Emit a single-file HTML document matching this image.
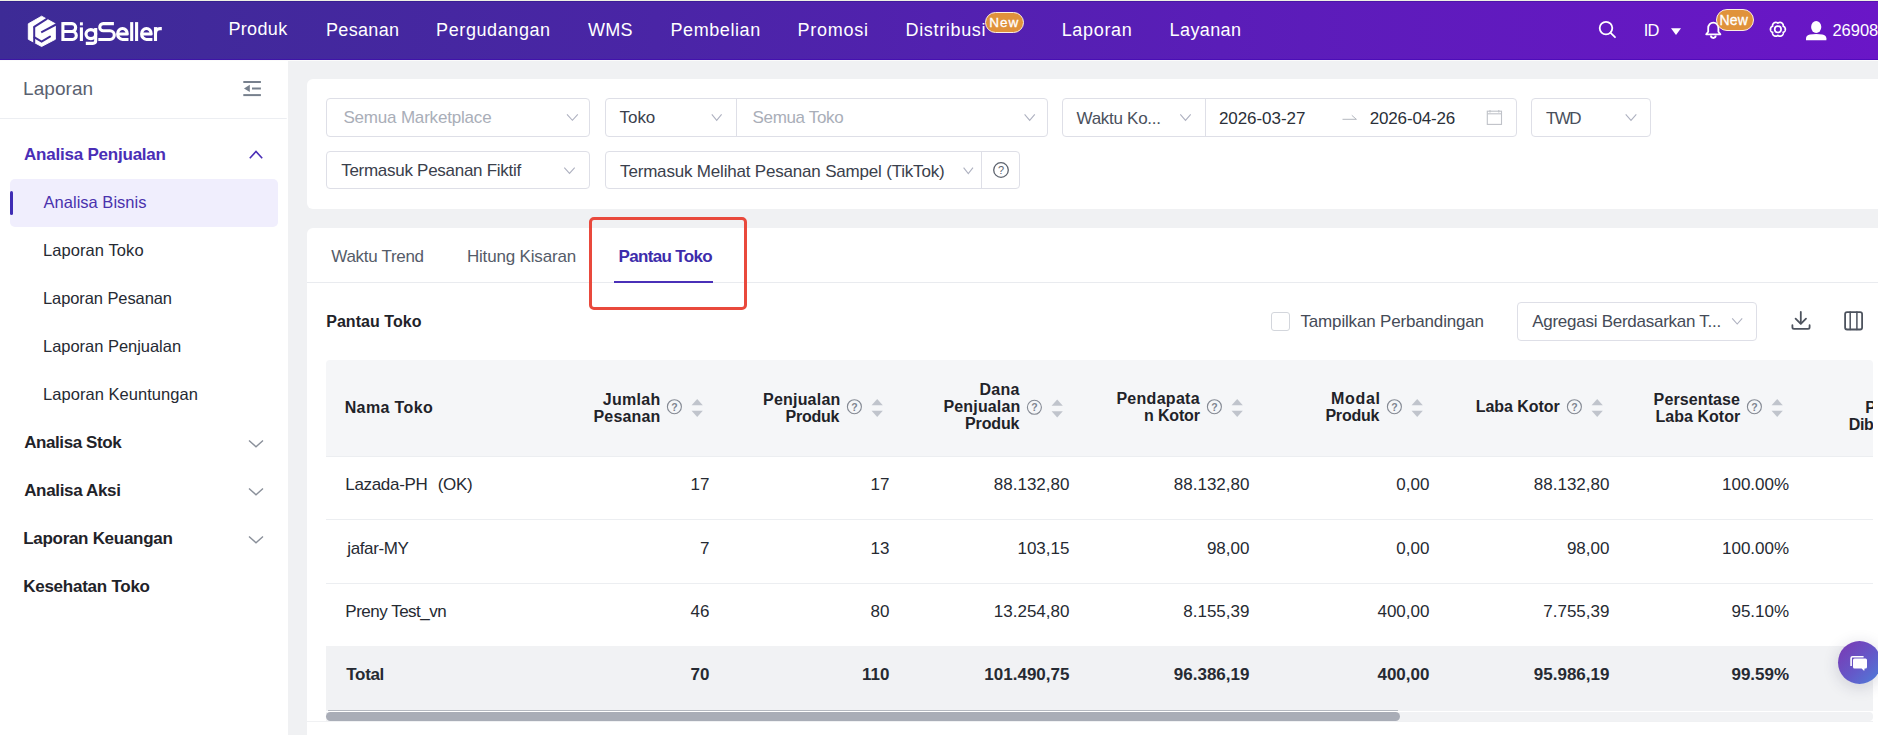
<!DOCTYPE html>
<html><head><meta charset="utf-8">
<style>
*{box-sizing:border-box}
html,body{margin:0;padding:0}
body{width:1878px;height:735px;overflow:hidden;position:relative;background:#f0f1f3;font-family:"Liberation Sans",sans-serif}
.a{position:absolute}
.t{position:absolute;white-space:nowrap;font-family:"Liberation Sans",sans-serif}
.inp{position:absolute;background:#fff;border:1px solid #dedfe7;border-radius:4px}
svg{position:absolute;overflow:visible}
</style></head><body>
<!-- header -->
<div class="a" style="left:0;top:0;width:1878px;height:1px;background:#eef1e4"></div>
<div class="a" style="left:0;top:1px;width:1878px;height:59px;background:linear-gradient(90deg,#3d2b96 0%,#4a25a6 35%,#5a1db8 65%,#6a16c7 100%)"></div>
<div class="a" style="left:0;top:1px;width:1878px;height:1px;background:rgba(20,10,100,.22)"></div>
<div class="a" style="left:0;top:59px;width:1878px;height:1px;background:rgba(60,0,180,.5)"></div>
<div class="a" style="left:0;top:60px;width:1878px;height:1px;background:#fbfbfb"></div>
<!-- logo icon -->
<svg style="left:0;top:0" width="60" height="60" viewBox="0 0 60 60">
<polygon points="41.6,16.2 55.4,23.8 55.4,39.3 41.6,46.5 28.3,39.3 28.3,23.8" fill="#fff" stroke="#fff" stroke-width="0.9" stroke-linejoin="round"/>
<g stroke="#3f2b98" stroke-width="2" fill="none" stroke-linecap="round">
<line x1="34.2" y1="26.8" x2="34.2" y2="43.5" stroke-linecap="butt"/>
<line x1="34.2" y1="26.8" x2="46.8" y2="18.8"/>
<line x1="41.2" y1="32.3" x2="57" y2="24" stroke-linecap="butt"/>
<polyline points="34.5,37.4 41.6,41.6 50,36.6"/>
</g>
</svg>
<svg style="left:0;top:0" width="170" height="60" viewBox="0 0 170 60">
<g fill="none" stroke="#fff" stroke-width="3.1" stroke-linecap="butt" stroke-linejoin="round">
<path d="M62.9 22.1 L62.9 41"/>
<path d="M62.9 23.65 L72 23.65 A3.65 3.95 0 0 1 72 31.55 L62.9 31.55"/>
<path d="M62.9 31.55 L72.5 31.55 A3.75 3.9 0 0 1 72.5 39.45 L62.9 39.45"/>
<path d="M81.4 27.4 L81.4 41"/>
<path d="M86 34.1 A4.85 4.5 0 1 0 95.7 34.1 A4.85 4.5 0 1 0 86 34.1 Z"/>
<path d="M95.7 27.9 L95.7 40.6 Q95.7 43.4 92.9 43.4 L85.8 43.4"/>
<path d="M113.9 23.65 L103.2 23.65 A3.45 3.55 0 0 0 103.2 30.75 L110 30.75 A4.3 4.35 0 0 1 110 39.45 L98.3 39.45"/>
<path d="M117.6 34.05 L127.3 34.05 A4.85 5.5 0 1 0 122.45 39.45 L128.5 39.45"/>
<path d="M131.7 22.1 L131.7 41"/>
<path d="M136.6 22.1 L136.6 41"/>
<path d="M141.6 34.05 L151.2 34.05 A4.8 5.5 0 1 0 146.4 39.45 L152.4 39.45"/>
<path d="M155.5 27.1 L155.5 41"/>
<path d="M155.5 33.5 Q155.5 28.65 160 28.65 L161.8 28.65"/>
</g>
<rect x="79.95" y="22.3" width="2.9" height="3.1" fill="#fff"/>
</svg>
<!-- header icons -->
<svg style="left:0;top:0" width="1878" height="60" viewBox="0 0 1878 60">
<g fill="none" stroke="#fff" stroke-width="1.8">
<circle cx="1606" cy="28.1" r="6.3"/>
<line x1="1610.6" y1="32.8" x2="1615" y2="37.2" stroke-linecap="round"/>
<path d="M1706.2 34.3 L1708.2 31.8 L1708.2 28 A5.1 5.4 0 0 1 1718.4 28 L1718.4 31.8 L1720.4 34.3 Z" stroke-linejoin="round"/>
<path d="M1710.9 35.6 A2.4 2.4 0 0 0 1715.7 35.6"/>
</g>
<polygon points="1671,28.3 1681,28.3 1676,35" fill="#fff"/>
<g transform="translate(1777.9,29.3)" fill="none" stroke="#fff" stroke-width="1.7">
<path d="M7.45,0.00 L7.44,0.26 L7.41,0.52 L7.36,0.77 L7.28,1.02 L7.19,1.27 L7.08,1.51 L6.95,1.73 L6.80,1.95 L6.64,2.16 L6.46,2.35 L6.27,2.53 L6.05,2.70 L5.83,2.84 L5.58,2.97 L5.28,3.05 L5.36,3.35 L5.38,3.63 L5.36,3.90 L5.32,4.16 L5.27,4.42 L5.19,4.67 L5.09,4.92 L4.98,5.15 L4.84,5.38 L4.69,5.59 L4.53,5.80 L4.35,5.98 L4.15,6.16 L3.94,6.31 L3.73,6.45 L3.49,6.57 L3.26,6.67 L3.01,6.76 L2.76,6.82 L2.50,6.86 L2.24,6.89 L1.97,6.89 L1.71,6.87 L1.45,6.83 L1.19,6.77 L0.94,6.69 L0.69,6.59 L0.45,6.47 L0.22,6.32 L0.00,6.10 L-0.22,6.32 L-0.45,6.47 L-0.69,6.59 L-0.94,6.69 L-1.19,6.77 L-1.45,6.83 L-1.71,6.87 L-1.97,6.89 L-2.24,6.89 L-2.50,6.86 L-2.76,6.82 L-3.01,6.76 L-3.26,6.67 L-3.49,6.57 L-3.72,6.45 L-3.94,6.31 L-4.15,6.16 L-4.35,5.98 L-4.53,5.80 L-4.69,5.59 L-4.84,5.38 L-4.98,5.15 L-5.09,4.92 L-5.19,4.67 L-5.27,4.42 L-5.32,4.16 L-5.36,3.90 L-5.38,3.63 L-5.36,3.35 L-5.28,3.05 L-5.58,2.97 L-5.83,2.84 L-6.05,2.70 L-6.27,2.53 L-6.46,2.35 L-6.64,2.16 L-6.80,1.95 L-6.95,1.73 L-7.08,1.51 L-7.19,1.27 L-7.28,1.02 L-7.36,0.77 L-7.41,0.52 L-7.44,0.26 L-7.45,0.00 L-7.44,-0.26 L-7.41,-0.52 L-7.36,-0.77 L-7.28,-1.02 L-7.19,-1.27 L-7.08,-1.51 L-6.95,-1.73 L-6.80,-1.95 L-6.64,-2.16 L-6.46,-2.35 L-6.27,-2.53 L-6.05,-2.70 L-5.83,-2.84 L-5.58,-2.97 L-5.28,-3.05 L-5.36,-3.35 L-5.38,-3.63 L-5.36,-3.90 L-5.32,-4.16 L-5.27,-4.42 L-5.19,-4.67 L-5.09,-4.92 L-4.98,-5.15 L-4.84,-5.38 L-4.69,-5.59 L-4.53,-5.80 L-4.35,-5.98 L-4.15,-6.16 L-3.94,-6.31 L-3.73,-6.45 L-3.49,-6.57 L-3.26,-6.67 L-3.01,-6.76 L-2.76,-6.82 L-2.50,-6.86 L-2.24,-6.89 L-1.97,-6.89 L-1.71,-6.87 L-1.45,-6.83 L-1.19,-6.77 L-0.94,-6.69 L-0.69,-6.59 L-0.45,-6.47 L-0.22,-6.32 L-0.00,-6.10 L0.22,-6.32 L0.45,-6.47 L0.69,-6.59 L0.94,-6.69 L1.19,-6.77 L1.45,-6.83 L1.71,-6.87 L1.97,-6.89 L2.24,-6.89 L2.50,-6.86 L2.76,-6.82 L3.01,-6.76 L3.26,-6.67 L3.49,-6.57 L3.73,-6.45 L3.94,-6.31 L4.15,-6.16 L4.35,-5.98 L4.53,-5.80 L4.69,-5.59 L4.84,-5.38 L4.98,-5.15 L5.09,-4.92 L5.19,-4.67 L5.27,-4.42 L5.32,-4.16 L5.36,-3.90 L5.38,-3.63 L5.36,-3.35 L5.28,-3.05 L5.58,-2.97 L5.83,-2.84 L6.05,-2.70 L6.27,-2.53 L6.46,-2.35 L6.64,-2.16 L6.80,-1.95 L6.95,-1.73 L7.08,-1.51 L7.19,-1.27 L7.28,-1.02 L7.36,-0.77 L7.41,-0.52 L7.44,-0.26 L7.45,-0.00 Z" stroke-linejoin="round"/>
<circle cx="0" cy="0" r="3.2"/>
</g>
<g fill="#fff">
<ellipse cx="1816.2" cy="27" rx="5.1" ry="5.9"/>
<path d="M1806 40.2 L1806 38.2 Q1806.4 35.4 1810 34.6 Q1816.2 33.4 1822.4 34.6 Q1826 35.4 1826.4 38.2 L1826.4 40.2 Z"/>
</g>
</svg>
<!-- badges -->
<div class="a" style="left:985px;top:12px;width:39px;height:21px;border-radius:11px;background:#e0923b;border:1px solid #fbeee0"></div>
<div class="a" style="left:1715.5px;top:9px;width:38px;height:22px;border-radius:11px;background:#e0923b;border:1px solid #fbeee0"></div>

<!-- sidebar -->
<div class="a" style="left:0;top:61px;width:288px;height:674px;background:#fff"></div>
<div class="a" style="left:0;top:118px;width:287px;height:1px;background:#eceef2;border-radius:0 0 6px 0"></div>
<svg style="left:0;top:0" width="288" height="735">
<g stroke="#77808d" stroke-width="2" fill="none">
<line x1="243.3" y1="82" x2="260.9" y2="82"/>
<line x1="252" y1="88.5" x2="260.9" y2="88.5"/>
<line x1="243.3" y1="95.1" x2="260.9" y2="95.1"/>
</g>
<polygon points="244,88.4 249.8,84.8 249.8,92" fill="#77808d"/>
<polyline points="249.8,158.2 256,151.5 262.2,158.2" fill="none" stroke="#4a2eb6" stroke-width="1.6"/>
<g fill="none" stroke="#8a909a" stroke-width="1.4">
<polyline points="249,440.5 256,446.8 263,440.5"/>
<polyline points="249,488.5 256,494.8 263,488.5"/>
<polyline points="249,536.5 256,542.8 263,536.5"/>
</g>
</svg>
<div class="a" style="left:10px;top:179px;width:268px;height:48px;background:#f0eefd;border-radius:5px"></div>
<div class="a" style="left:10px;top:191px;width:3px;height:24px;background:#3f2db4;border-radius:2px"></div>

<!-- filter card -->
<div class="a" style="left:307px;top:79px;width:1600px;height:130px;background:#fff;border-radius:6px"></div>
<div class="inp" style="left:326px;top:98px;width:264px;height:39px"></div>
<div class="inp" style="left:605px;top:98px;width:443px;height:39px"></div>
<div class="a" style="left:736px;top:99px;width:1px;height:37px;background:#dedfe7"></div>
<div class="inp" style="left:1062px;top:98px;width:455px;height:39px"></div>
<div class="a" style="left:1205px;top:99px;width:1px;height:37px;background:#dedfe7"></div>
<div class="inp" style="left:1531px;top:98px;width:120px;height:39px"></div>
<div class="inp" style="left:326px;top:151px;width:264px;height:38px"></div>
<div class="inp" style="left:605px;top:151px;width:415px;height:38px"></div>
<div class="a" style="left:981px;top:152px;width:1px;height:36px;background:#dedfe7"></div>
<svg style="left:0;top:0" width="1878" height="735">
<g fill="none" stroke="#aeb1c0" stroke-width="1.1">
<polyline points="567,114.3 572.4,120.3 577.8,114.3"/>
<polyline points="711.8,114.3 716.7,120.3 721.6,114.3"/>
<polyline points="1024.6,114.3 1029.7,120.3 1034.8,114.3"/>
<polyline points="1180.3,114.3 1185.5,120.3 1190.7,114.3"/>
<polyline points="1625.7,114.3 1631,120.3 1636.3,114.3"/>
<polyline points="564.3,167.6 569.5,173.4 574.7,167.6"/>
<polyline points="963.6,167.6 968.3,173.6 973,167.6"/>
</g>
<g fill="none" stroke="#5d636e" stroke-width="1.3">
<circle cx="1001" cy="170" r="7.3"/>
</g>
<text x="1001" y="174" font-family="Liberation Sans" font-size="11" fill="#5d636e" text-anchor="middle">?</text>
<!-- date arrow -->
<g stroke="#b3b7bf" stroke-width="1" fill="none">
<line x1="1342.5" y1="119.3" x2="1356.5" y2="119.3"/>
<line x1="1356.3" y1="119.3" x2="1351.8" y2="115.3"/>
</g>
<!-- calendar -->
<g stroke="#bfc2c8" stroke-width="1.1" fill="none">
<rect x="1487.3" y="111.2" width="14.2" height="13.2"/>
<line x1="1487.3" y1="113.8" x2="1501.5" y2="113.8"/>
<line x1="1490" y1="110" x2="1490" y2="112.5"/>
<line x1="1498.8" y1="110" x2="1498.8" y2="112.5"/>
</g>
</svg>

<!-- tab card -->
<div class="a" style="left:307px;top:228px;width:1600px;height:520px;background:#fff;border-radius:6px"></div>
<div class="a" style="left:307px;top:282px;width:1571px;height:1px;background:#e9ebef"></div>
<div class="a" style="left:614px;top:281px;width:99px;height:2px;background:#4a30b8"></div>
<div class="a" style="left:589px;top:217px;width:158px;height:93px;border:3px solid #e9493c;border-radius:5px"></div>
<!-- checkbox -->
<div class="a" style="left:1271px;top:312px;width:19px;height:19px;border:1px solid #d3d6dc;border-radius:3px;background:#fff"></div>
<div class="inp" style="left:1517px;top:302px;width:240px;height:39px"></div>
<svg style="left:0;top:0" width="1878" height="735">
<polyline points="1732.2,318.4 1737.2,324 1742.2,318.4" fill="none" stroke="#aeb1c0" stroke-width="1.1"/>
<g fill="none" stroke="#4d535e" stroke-width="1.8" stroke-linecap="round" stroke-linejoin="round">
<line x1="1800.8" y1="312" x2="1800.8" y2="323.3"/>
<polyline points="1795.6,318.7 1800.8,323.8 1806,318.7"/>
<path d="M1792.4 325.2 L1792.4 327.2 Q1792.4 328.8 1794 328.8 L1808 328.8 Q1809.6 328.8 1809.6 327.2 L1809.6 325.2"/>
<rect x="1845.1" y="312.1" width="17" height="17.4" rx="2"/>
<line x1="1850.2" y1="312.1" x2="1850.2" y2="329.5" stroke-width="1.5"/>
<line x1="1856.9" y1="312.1" x2="1856.9" y2="329.5" stroke-width="1.5"/>
</g>
</svg>

<!-- table -->
<div class="a" style="left:326px;top:360px;width:1547px;height:96px;background:#f5f6f8;border-radius:4px 4px 0 0"></div>
<div class="a" style="left:326px;top:456px;width:1547px;height:1px;background:#eceef1"></div>
<div class="a" style="left:326px;top:519px;width:1547px;height:1px;background:#eceef1"></div>
<div class="a" style="left:326px;top:583px;width:1547px;height:1px;background:#eceef1"></div>
<div class="a" style="left:326px;top:646px;width:1547px;height:65px;background:#f1f2f4"></div>
<div class="a" style="left:328px;top:710px;width:1070px;height:1px;background:#b4b8c0"></div>
<div class="a" style="left:326px;top:711px;width:1547px;height:1px;background:#fff"></div>
<div class="a" style="left:326px;top:712px;width:1547px;height:9px;background:#f1f2f4;border-radius:0 4px 4px 0"></div>
<div class="a" style="left:326px;top:712px;width:1074px;height:9px;background:#a9adb7;border-radius:4.5px"></div>
<div class="a" style="left:307px;top:721px;width:1571px;height:1px;background:#f0f1f3"></div>
<svg style="left:0;top:0" width="1878" height="735">
<g id="hs">
<g fill="none" stroke="#858a94" stroke-width="1.1"><circle cx="674.4" cy="406.7" r="7"/></g>
<text x="674.4" y="410.6" font-family="Liberation Sans" font-size="10.5" font-weight="700" fill="#7f858f" text-anchor="middle">?</text>
<polygon points="691.6,405.2 697.2,399 702.8,405.2" fill="#c0c4cc"/>
<polygon points="691.6,410.7 697.2,417 702.8,410.7" fill="#c0c4cc"/>
</g>
<use href="#hs" x="180"/>
<use href="#hs" x="360" y="0.6"/>
<use href="#hs" x="540"/>
<use href="#hs" x="720"/>
<use href="#hs" x="900"/>
<use href="#hs" x="1080"/>
</svg>
<!-- clip right of table -->
<div class="a" style="left:1873px;top:283px;width:5px;height:452px;background:#fff"></div>
<div class="t" style="left:228.40px;top:20.00px;font-size:18px;line-height:18px;font-weight:400;color:#ffffff;letter-spacing:0.354px">Produk</div>
<div class="t" style="left:326.00px;top:21.00px;font-size:18px;line-height:18px;font-weight:400;color:#ffffff;letter-spacing:0.325px">Pesanan</div>
<div class="t" style="left:436.10px;top:21.00px;font-size:18px;line-height:18px;font-weight:400;color:#ffffff;letter-spacing:0.591px">Pergudangan</div>
<div class="t" style="left:588.00px;top:21.00px;font-size:18px;line-height:18px;font-weight:400;color:#ffffff;letter-spacing:0.308px">WMS</div>
<div class="t" style="left:670.50px;top:21.00px;font-size:18px;line-height:18px;font-weight:400;color:#ffffff;letter-spacing:0.582px">Pembelian</div>
<div class="t" style="left:797.40px;top:21.00px;font-size:18px;line-height:18px;font-weight:400;color:#ffffff;letter-spacing:0.764px">Promosi</div>
<div class="t" style="left:905.50px;top:21.00px;font-size:18px;line-height:18px;font-weight:400;color:#ffffff;letter-spacing:0.665px">Distribusi</div>
<div class="t" style="left:1061.70px;top:21.00px;font-size:18px;line-height:18px;font-weight:400;color:#ffffff;letter-spacing:0.675px">Laporan</div>
<div class="t" style="left:1169.60px;top:21.00px;font-size:18px;line-height:18px;font-weight:400;color:#ffffff;letter-spacing:0.391px">Layanan</div>
<div class="t" style="left:989.30px;top:16.00px;font-size:13.5px;line-height:13.5px;font-weight:400;color:#ffffff;letter-spacing:0.971px;-webkit-text-stroke:0.3px #fff">New</div>
<div class="t" style="left:1719.40px;top:13.00px;font-size:14px;line-height:14px;font-weight:400;color:#ffffff;letter-spacing:0.202px;-webkit-text-stroke:0.3px #fff">New</div>
<div class="t" style="left:1643.80px;top:22.00px;font-size:16.5px;line-height:16.5px;font-weight:400;color:#ffffff;letter-spacing:-0.884px">ID</div>
<div class="t" style="left:1832.40px;top:22.00px;font-size:16.5px;line-height:16.5px;font-weight:400;color:#ffffff;letter-spacing:0.000px">26908</div>
<div class="t" style="left:23.00px;top:79.00px;font-size:19px;line-height:19px;font-weight:400;color:#5a6170;letter-spacing:0.073px">Laporan</div>
<div class="t" style="left:24.00px;top:146.00px;font-size:17px;line-height:17px;font-weight:700;color:#4a2eb6;letter-spacing:-0.219px">Analisa Penjualan</div>
<div class="t" style="left:43.60px;top:194.00px;font-size:16.5px;line-height:16.5px;font-weight:400;color:#4a32ad;letter-spacing:0.010px">Analisa Bisnis</div>
<div class="t" style="left:42.90px;top:242.00px;font-size:16.5px;line-height:16.5px;font-weight:400;color:#262a33;letter-spacing:0.090px">Laporan Toko</div>
<div class="t" style="left:43.00px;top:290.00px;font-size:16.5px;line-height:16.5px;font-weight:400;color:#262a33;letter-spacing:-0.093px">Laporan Pesanan</div>
<div class="t" style="left:43.00px;top:338.00px;font-size:16.5px;line-height:16.5px;font-weight:400;color:#262a33;letter-spacing:-0.029px">Laporan Penjualan</div>
<div class="t" style="left:43.00px;top:386.00px;font-size:16.5px;line-height:16.5px;font-weight:400;color:#262a33;letter-spacing:0.043px">Laporan Keuntungan</div>
<div class="t" style="left:24.20px;top:434.00px;font-size:17px;line-height:17px;font-weight:700;color:#1f2329;letter-spacing:-0.416px">Analisa Stok</div>
<div class="t" style="left:24.20px;top:482.00px;font-size:17px;line-height:17px;font-weight:700;color:#1f2329;letter-spacing:-0.344px">Analisa Aksi</div>
<div class="t" style="left:23.20px;top:530.00px;font-size:17px;line-height:17px;font-weight:700;color:#1f2329;letter-spacing:-0.292px">Laporan Keuangan</div>
<div class="t" style="left:23.20px;top:578.00px;font-size:17px;line-height:17px;font-weight:700;color:#1f2329;letter-spacing:-0.251px">Kesehatan Toko</div>
<div class="t" style="left:343.40px;top:109.00px;font-size:17px;line-height:17px;font-weight:400;color:#a9aeb8;letter-spacing:-0.183px">Semua Marketplace</div>
<div class="t" style="left:619.60px;top:109.00px;font-size:17px;line-height:17px;font-weight:400;color:#3a404c;letter-spacing:-0.085px">Toko</div>
<div class="t" style="left:752.50px;top:109.00px;font-size:17px;line-height:17px;font-weight:400;color:#a9aeb8;letter-spacing:-0.327px">Semua Toko</div>
<div class="t" style="left:1076.50px;top:110.00px;font-size:17px;line-height:17px;font-weight:400;color:#4a505c;letter-spacing:-0.281px">Waktu Ko...</div>
<div class="t" style="left:1218.90px;top:110.00px;font-size:17px;line-height:17px;font-weight:400;color:#2a2f38;letter-spacing:-0.056px">2026-03-27</div>
<div class="t" style="left:1369.70px;top:110.00px;font-size:17px;line-height:17px;font-weight:400;color:#2a2f38;letter-spacing:-0.156px">2026-04-26</div>
<div class="t" style="left:1546.00px;top:110.00px;font-size:17px;line-height:17px;font-weight:400;color:#4a505c;letter-spacing:-1.565px">TWD</div>
<div class="t" style="left:341.20px;top:162.00px;font-size:17px;line-height:17px;font-weight:400;color:#3a404c;letter-spacing:-0.278px">Termasuk Pesanan Fiktif</div>
<div class="t" style="left:620.10px;top:163.00px;font-size:17px;line-height:17px;font-weight:400;color:#3a404c;letter-spacing:-0.189px">Termasuk Melihat Pesanan Sampel (TikTok)</div>
<div class="t" style="left:331.30px;top:248.00px;font-size:17px;line-height:17px;font-weight:400;color:#555c69;letter-spacing:-0.299px">Waktu Trend</div>
<div class="t" style="left:466.90px;top:248.00px;font-size:17px;line-height:17px;font-weight:400;color:#555c69;letter-spacing:-0.173px">Hitung Kisaran</div>
<div class="t" style="left:618.60px;top:248.00px;font-size:17px;line-height:17px;font-weight:700;color:#3d2cab;letter-spacing:-0.666px">Pantau Toko</div>
<div class="t" style="left:326.20px;top:314.00px;font-size:16px;line-height:16px;font-weight:700;color:#1f2329;letter-spacing:0.045px">Pantau Toko</div>
<div class="t" style="left:1300.50px;top:313.00px;font-size:17px;line-height:17px;font-weight:400;color:#454b57;letter-spacing:-0.170px">Tampilkan Perbandingan</div>
<div class="t" style="left:1532.20px;top:313.00px;font-size:17px;line-height:17px;font-weight:400;color:#454b57;letter-spacing:-0.262px">Agregasi Berdasarkan T...</div>
<div class="t" style="left:344.70px;top:400.00px;font-size:16px;line-height:16px;font-weight:700;color:#1f2329;letter-spacing:0.377px">Nama Toko</div>
<div class="t" style="left:602.70px;top:392.00px;font-size:16px;line-height:16px;font-weight:700;color:#1f2329;letter-spacing:0.332px">Jumlah</div>
<div class="t" style="left:593.50px;top:409.00px;font-size:16px;line-height:16px;font-weight:700;color:#1f2329;letter-spacing:0.177px">Pesanan</div>
<div class="t" style="left:763.00px;top:392.00px;font-size:16px;line-height:16px;font-weight:700;color:#1f2329;letter-spacing:0.212px">Penjualan</div>
<div class="t" style="left:785.50px;top:409.00px;font-size:16px;line-height:16px;font-weight:700;color:#1f2329;letter-spacing:-0.244px">Produk</div>
<div class="t" style="left:979.60px;top:382.00px;font-size:16px;line-height:16px;font-weight:700;color:#1f2329;letter-spacing:0.224px">Dana</div>
<div class="t" style="left:943.50px;top:399.00px;font-size:16px;line-height:16px;font-weight:700;color:#1f2329;letter-spacing:0.149px">Penjualan</div>
<div class="t" style="left:965.10px;top:416.00px;font-size:16px;line-height:16px;font-weight:700;color:#1f2329;letter-spacing:-0.164px">Produk</div>
<div class="t" style="left:1116.40px;top:391.00px;font-size:16px;line-height:16px;font-weight:700;color:#1f2329;letter-spacing:0.286px">Pendapata</div>
<div class="t" style="left:1144.00px;top:408.00px;font-size:16px;line-height:16px;font-weight:700;color:#1f2329;letter-spacing:-0.158px">n Kotor</div>
<div class="t" style="left:1330.90px;top:391.00px;font-size:16px;line-height:16px;font-weight:700;color:#1f2329;letter-spacing:0.732px">Modal</div>
<div class="t" style="left:1325.40px;top:408.00px;font-size:16px;line-height:16px;font-weight:700;color:#1f2329;letter-spacing:-0.204px">Produk</div>
<div class="t" style="left:1475.70px;top:399.00px;font-size:16px;line-height:16px;font-weight:700;color:#1f2329;letter-spacing:-0.047px">Laba Kotor</div>
<div class="t" style="left:1653.60px;top:392.00px;font-size:16px;line-height:16px;font-weight:700;color:#1f2329;letter-spacing:0.112px">Persentase</div>
<div class="t" style="left:1655.50px;top:409.00px;font-size:16px;line-height:16px;font-weight:700;color:#1f2329;letter-spacing:0.031px">Laba Kotor</div>
<div class="t" style="left:1865.20px;top:400.00px;font-size:16px;line-height:16px;font-weight:700;color:#1f2329;letter-spacing:0.000px">P</div>
<div class="t" style="left:1848.80px;top:417.00px;font-size:16px;line-height:16px;font-weight:700;color:#1f2329;letter-spacing:-0.411px">Dibayar</div>
<div class="t" style="left:345.30px;top:476.00px;font-size:17px;line-height:17px;font-weight:400;color:#262a32;letter-spacing:-0.322px">Lazada-PH</div>
<div class="t" style="left:690.55px;top:476.00px;font-size:17px;line-height:17px;font-weight:400;color:#262a32;letter-spacing:0.000px">17</div>
<div class="t" style="left:870.55px;top:476.00px;font-size:17px;line-height:17px;font-weight:400;color:#262a32;letter-spacing:0.000px">17</div>
<div class="t" style="left:993.83px;top:476.00px;font-size:17px;line-height:17px;font-weight:400;color:#262a32;letter-spacing:0.000px">88.132,80</div>
<div class="t" style="left:1173.83px;top:476.00px;font-size:17px;line-height:17px;font-weight:400;color:#262a32;letter-spacing:0.000px">88.132,80</div>
<div class="t" style="left:1396.37px;top:476.00px;font-size:17px;line-height:17px;font-weight:400;color:#262a32;letter-spacing:0.000px">0,00</div>
<div class="t" style="left:1533.83px;top:476.00px;font-size:17px;line-height:17px;font-weight:400;color:#262a32;letter-spacing:0.000px">88.132,80</div>
<div class="t" style="left:1722.00px;top:476.00px;font-size:17px;line-height:17px;font-weight:400;color:#262a32;letter-spacing:0.000px">100.00%</div>
<div class="t" style="left:347.30px;top:540.00px;font-size:17px;line-height:17px;font-weight:400;color:#262a32;letter-spacing:-0.385px">jafar-MY</div>
<div class="t" style="left:700.00px;top:540.00px;font-size:17px;line-height:17px;font-weight:400;color:#262a32;letter-spacing:0.000px">7</div>
<div class="t" style="left:870.55px;top:540.00px;font-size:17px;line-height:17px;font-weight:400;color:#262a32;letter-spacing:0.000px">13</div>
<div class="t" style="left:1017.46px;top:540.00px;font-size:17px;line-height:17px;font-weight:400;color:#262a32;letter-spacing:0.000px">103,15</div>
<div class="t" style="left:1206.91px;top:540.00px;font-size:17px;line-height:17px;font-weight:400;color:#262a32;letter-spacing:0.000px">98,00</div>
<div class="t" style="left:1396.37px;top:540.00px;font-size:17px;line-height:17px;font-weight:400;color:#262a32;letter-spacing:0.000px">0,00</div>
<div class="t" style="left:1566.91px;top:540.00px;font-size:17px;line-height:17px;font-weight:400;color:#262a32;letter-spacing:0.000px">98,00</div>
<div class="t" style="left:1722.00px;top:540.00px;font-size:17px;line-height:17px;font-weight:400;color:#262a32;letter-spacing:0.000px">100.00%</div>
<div class="t" style="left:345.30px;top:603.00px;font-size:17px;line-height:17px;font-weight:400;color:#262a32;letter-spacing:-0.497px">Preny Test_vn</div>
<div class="t" style="left:690.55px;top:603.00px;font-size:17px;line-height:17px;font-weight:400;color:#262a32;letter-spacing:0.000px">46</div>
<div class="t" style="left:870.55px;top:603.00px;font-size:17px;line-height:17px;font-weight:400;color:#262a32;letter-spacing:0.000px">80</div>
<div class="t" style="left:993.83px;top:603.00px;font-size:17px;line-height:17px;font-weight:400;color:#262a32;letter-spacing:0.000px">13.254,80</div>
<div class="t" style="left:1183.28px;top:603.00px;font-size:17px;line-height:17px;font-weight:400;color:#262a32;letter-spacing:0.000px">8.155,39</div>
<div class="t" style="left:1377.46px;top:603.00px;font-size:17px;line-height:17px;font-weight:400;color:#262a32;letter-spacing:0.000px">400,00</div>
<div class="t" style="left:1543.28px;top:603.00px;font-size:17px;line-height:17px;font-weight:400;color:#262a32;letter-spacing:0.000px">7.755,39</div>
<div class="t" style="left:1731.46px;top:603.00px;font-size:17px;line-height:17px;font-weight:400;color:#262a32;letter-spacing:0.000px">95.10%</div>
<div class="t" style="left:346.30px;top:666.00px;font-size:17px;line-height:17px;font-weight:700;color:#262a32;letter-spacing:-0.331px">Total</div>
<div class="t" style="left:690.55px;top:666.00px;font-size:17px;line-height:17px;font-weight:700;color:#262a32;letter-spacing:0.000px">70</div>
<div class="t" style="left:862.03px;top:666.00px;font-size:17px;line-height:17px;font-weight:700;color:#262a32;letter-spacing:0.000px">110</div>
<div class="t" style="left:984.37px;top:666.00px;font-size:17px;line-height:17px;font-weight:700;color:#262a32;letter-spacing:0.000px">101.490,75</div>
<div class="t" style="left:1173.83px;top:666.00px;font-size:17px;line-height:17px;font-weight:700;color:#262a32;letter-spacing:0.000px">96.386,19</div>
<div class="t" style="left:1377.46px;top:666.00px;font-size:17px;line-height:17px;font-weight:700;color:#262a32;letter-spacing:0.000px">400,00</div>
<div class="t" style="left:1533.83px;top:666.00px;font-size:17px;line-height:17px;font-weight:700;color:#262a32;letter-spacing:0.000px">95.986,19</div>
<div class="t" style="left:1731.46px;top:666.00px;font-size:17px;line-height:17px;font-weight:700;color:#262a32;letter-spacing:0.000px">99.59%</div>
<div class="t" style="left:437.80px;top:476.00px;font-size:17px;line-height:17px;font-weight:400;color:#262a32;letter-spacing:-0.341px">(OK)</div>
<div class="a" style="left:1873px;top:283px;width:5px;height:452px;background:#fff"></div>
<!-- chat button -->
<div class="a" style="left:1838px;top:641px;width:43px;height:43px;border-radius:50%;background:linear-gradient(135deg,#7c37b2 0%,#6459c9 55%,#4d80da 100%);box-shadow:0 3px 16px rgba(40,40,80,.18)"></div>
<svg style="left:0;top:0" width="1878" height="735">
<path d="M1851.1 666 L1851.1 658.3 Q1851.1 656.8 1852.6 656.8 L1863.6 656.8" fill="none" stroke="#fff" stroke-width="1.6"/>
<path d="M1854.5 658.6 L1865.5 658.6 Q1867 658.6 1867 660.1 L1867 667.1 Q1867 668.6 1865.5 668.6 L1864.6 668.6 L1864.2 671 L1861.6 668.6 L1854.5 668.6 Q1853 668.6 1853 667.1 L1853 660.1 Q1853 658.6 1854.5 658.6 Z" fill="#fff"/>
</svg>
</body></html>
